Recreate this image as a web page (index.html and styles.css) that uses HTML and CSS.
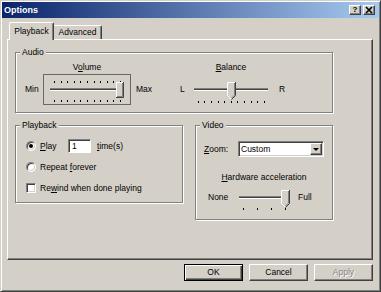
FILE: index.html
```html
<!DOCTYPE html>
<html lang="en">
  <head>
    <meta charset="UTF-8" />
    <meta name="viewport" content="width=device-width, initial-scale=1.0" />
    <title>Options</title>
    <link rel="stylesheet" href="styles.css">
  </head>
  <body>
    <div class="window">
      <div class="titlebar">
        <span class="title">Options</span>
        <span class="caption-btn help">?</span>
        <span class="caption-btn">
          <svg width="10" height="8" viewBox="0 0 10 8">
            <path d="M2 1L8 7M8 1L2 7" stroke="#000" stroke-width="1.6" fill="none" />
          </svg>
        </span>
      </div>

      <div class="tabs">
        <div class="tab active">Playback</div>
        <div class="tab">Advanced</div>
      </div>

      <div class="panel">
        <div class="group audio">
          <span class="group-title">Audio</span>

          <div class="slider volume">
            <span class="caption">V<u>o</u>lume</span>
            <span class="end first">Min</span>
            <svg width="88" height="31" viewBox="0 0 88 31">
              <rect x="0.5" y="0.5" width="87" height="30" fill="none" stroke="#000" stroke-dasharray="1 1" />
              <path d="M11.5 7v2M18.5 7v2M24.5 7v2M31.5 7v2M37.5 7v2M44.5 7v2M51.5 7v2M57.5 7v2M64.5 7v2M70.5 7v2M77.5 7v2" stroke="#000" />
              <path d="M11.5 26v2M18.5 26v2M24.5 26v2M31.5 26v2M37.5 26v2M44.5 26v2M51.5 26v2M57.5 26v2M64.5 26v2M70.5 26v2M77.5 26v2" stroke="#000" />
              <path d="M7 14.5H81" stroke="#808080" />
              <path d="M7 15.5H81" stroke="#404040" />
              <path d="M7 16.5H81" stroke="#fff" />
              <rect x="73" y="8" width="8" height="16" fill="#d4d0c8" />
              <path d="M73.5 23.5V8.5H80.5" stroke="#fff" fill="none" />
              <path d="M80.5 8V23.5H73" stroke="#404040" fill="none" />
              <path d="M79.5 9V22.5H74" stroke="#808080" fill="none" />
            </svg>
            <span class="end last max">Max</span>
          </div>

          <div class="slider balance">
            <span class="caption"><u>B</u>alance</span>
            <span class="end first">L</span>
            <svg width="82" height="31" viewBox="0 0 82 31">
              <path d="M8.5 27v2M14.5 27v2M21.5 27v2M28.5 27v2M34.5 27v2M41.5 27v2M47.5 27v2M54.5 27v2M61.5 27v2M67.5 27v2M74.5 27v2" stroke="#000" />
              <path d="M4 14.5H78" stroke="#808080" />
              <path d="M4 15.5H78" stroke="#404040" />
              <path d="M4 16.5H78" stroke="#fff" />
              <polygon points="37,8 46,8 46,21 41.5,25.5 37,21" fill="#d4d0c8" />
              <path d="M41 25L37.5 21.5V8.5H45" stroke="#fff" fill="none" />
              <path d="M45.5 8V21.5L41.5 25.5" stroke="#404040" fill="none" />
              <path d="M44.5 9V21L41.5 24" stroke="#808080" fill="none" />
            </svg>
            <span class="end last r">R</span>
          </div>
        </div>

        <div class="row">
          <div class="group playback">
            <span class="group-title">Playback</span>
            <div class="option">
              <span class="radio checked"></span>
              <span class="play-label"><u>P</u>lay</span>
              <span class="edit">1</span>
              <span class="times"><u>t</u>ime(s)</span>
            </div>
            <div class="option">
              <span class="radio"></span>
              <span>Repeat <u>f</u>orever</span>
            </div>
            <div class="option">
              <span class="check"></span>
              <span>Re<u>w</u>ind when done playing</span>
            </div>
          </div>

          <div class="group video">
            <span class="group-title">Video</span>
            <div class="zoom-row">
              <span class="zoom-label"><u>Z</u>oom:</span>
              <div class="combo">
                <span class="combo-text">Custom</span>
                <span class="combo-btn"><span class="arrow"></span></span>
              </div>
            </div>
            <div class="hw-caption"><u>H</u>ardware acceleration</div>
            <div class="hw-row">
              <span class="hw-end none">None</span>
              <svg width="58" height="23" viewBox="0 0 58 23">
                <path d="M8.5 20v2M22.5 20v2M36.5 20v2M50.5 20v2" stroke="#000" />
                <path d="M4 8.5H54" stroke="#808080" />
                <path d="M4 9.5H54" stroke="#404040" />
                <path d="M4 10.5H54" stroke="#fff" />
                <polygon points="46,2 55,2 55,15 50.5,19.5 46,15" fill="#d4d0c8" />
                <path d="M50 19L46.5 15.5V2.5H54" stroke="#fff" fill="none" />
                <path d="M54.5 2V15.5L50.5 19.5" stroke="#404040" fill="none" />
                <path d="M53.5 3V15L50.5 18" stroke="#808080" fill="none" />
              </svg>
              <span class="hw-end full">Full</span>
            </div>
          </div>
        </div>
      </div>

      <div class="buttons">
        <div class="btn default">OK</div>
        <div class="btn">Cancel</div>
        <div class="btn disabled">Apply</div>
      </div>
    </div>
  </body>
</html>
```

FILE: styles.css
```css
body {
  margin: 0;
  font-family: "Liberation Sans", Arial, sans-serif;
  font-size: 8.5px;
  line-height: 11px;
  color: #000;
}
.window {
  width: 381px;
  height: 292px;
  box-sizing: border-box;
  background-color: #d4d0c8;
  border: 1px solid;
  border-color: #d4d0c8 #404040 #404040 #d4d0c8;
  box-shadow: inset 1px 1px #fff, inset -1px -1px #808080;
  padding: 1px;
  display: flex;
  flex-direction: column;
}
.titlebar {
  height: 16px;
  background: linear-gradient(to right, #0a246a, #a6caf0);
  display: flex;
  align-items: center;
  padding: 0 4px 0 2px;
}
.title {
  flex: 1;
  color: white;
  font-weight: bold;
  font-size: 9px;
}
.caption-btn {
  width: 12px;
  height: 10px;
  box-sizing: border-box;
  background-color: #d4d0c8;
  border: 1px solid;
  border-color: #fff #404040 #404040 #fff;
  box-shadow: inset -1px -1px #808080;
  display: flex;
  align-items: center;
  justify-content: center;
  font-weight: bold;
  font-size: 8px;
  line-height: 8px;
}
.help {
  margin-right: 2px;
}

/* tabs */
.tabs {
  display: flex;
  align-items: flex-end;
  height: 21px;
  padding-left: 7px;
}
.tab {
  box-sizing: border-box;
  width: 48px;
  height: 14px;
  border: 1px solid;
  border-color: #fff #404040 transparent transparent;
  border-left: 0;
  border-bottom: 0;
  box-shadow: inset -1px 0 #808080;
  border-radius: 0 2px 0 0;
  text-align: center;
  padding-top: 1px;
}
.tab.active {
  width: 45px;
  height: 18px;
  margin-bottom: -1px;
  position: relative;
  z-index: 1;
  background-color: #d4d0c8;
  border-left: 1px solid #fff;
  border-radius: 2px 2px 0 0;
  padding-top: 3px;
}

.panel {
  margin: 0 6px 0 5px;
  height: 221px;
  box-sizing: border-box;
  border: 1px solid;
  border-color: #fff #404040 #404040 #fff;
  box-shadow: inset -1px -1px #808080;
  padding: 12px 0 0 7px;
}

/* group boxes */
.group {
  position: relative;
  box-sizing: border-box;
  border: 1px solid #808080;
  box-shadow: inset 1px 1px #fff, 1px 1px #fff;
}
.group-title {
  position: absolute;
  top: -6px;
  left: 4px;
  padding: 0 2px;
  background-color: #d4d0c8;
}
.audio {
  width: 318px;
  height: 61px;
  display: flex;
  padding: 9px 0 0 9px;
}

/* trackbars */
.slider {
  display: grid;
  grid-template-rows: 11px 31px;
  row-gap: 1px;
  align-items: center;
}
.slider .caption {
  grid-column: 2;
  justify-self: center;
}
.slider svg {
  grid-row: 2;
  grid-column: 2;
  display: block;
}
.slider .first {
  grid-row: 2;
  grid-column: 1;
}
.slider .last {
  grid-row: 2;
  grid-column: 3;
}
.volume {
  grid-template-columns: 18px 88px 21px;
}
.max {
  padding-left: 5px;
}
.balance {
  grid-template-columns: 10px 82px 14px;
  margin-left: 28px;
}
.r {
  padding-left: 7px;
}

.row {
  display: flex;
  align-items: flex-start;
  gap: 12px;
  margin-top: 12px;
}

/* playback */
.playback {
  width: 168px;
  height: 78px;
  padding: 13px 0 0 10px;
  display: flex;
  flex-direction: column;
  gap: 7px;
}
.option {
  display: flex;
  align-items: center;
  height: 14px;
}
.radio,
.check {
  width: 10px;
  height: 10px;
  box-sizing: border-box;
  background-color: white;
  border: 1px solid;
  border-color: #808080 #fff #fff #808080;
  box-shadow: inset 1px 1px #404040, inset -1px -1px #d4d0c8;
  margin-right: 4px;
  display: flex;
  align-items: center;
  justify-content: center;
}
.radio {
  border-radius: 50%;
}
.radio.checked::after {
  content: "";
  width: 4px;
  height: 4px;
  border-radius: 50%;
  background-color: #000;
}
.play-label {
  width: 28px;
}
.edit {
  width: 23px;
  height: 14px;
  box-sizing: border-box;
  background-color: white;
  border: 1px solid;
  border-color: #808080 #fff #fff #808080;
  box-shadow: inset 1px 1px #404040;
  padding-left: 3px;
  line-height: 12px;
}
.times {
  margin-left: 6px;
}

/* video */
.video {
  width: 138px;
  height: 95px;
  padding-top: 15px;
}
.zoom-row {
  display: flex;
  align-items: center;
  padding-left: 8px;
}
.zoom-label {
  width: 34px;
}
.combo {
  width: 86px;
  height: 16px;
  box-sizing: border-box;
  background-color: white;
  border: 1px solid;
  border-color: #808080 #fff #fff #808080;
  box-shadow: inset 1px 1px #404040, inset -1px -1px #d4d0c8;
  padding: 1px;
  display: flex;
  align-items: center;
}
.combo-text {
  flex: 1;
  padding-left: 1px;
}
.combo-btn {
  width: 12px;
  height: 12px;
  box-sizing: border-box;
  background-color: #d4d0c8;
  border: 1px solid;
  border-color: #fff #404040 #404040 #fff;
  box-shadow: inset -1px -1px #808080;
  display: flex;
  align-items: center;
  justify-content: center;
}
.arrow {
  width: 0;
  height: 0;
  border-left: 3px solid transparent;
  border-right: 3px solid transparent;
  border-top: 3px solid #000;
}
.hw-caption {
  text-align: center;
  margin-top: 15px;
}
.hw-row {
  display: flex;
  align-items: flex-start;
  margin-top: 5px;
  padding-left: 12px;
}
.hw-row svg {
  display: block;
}
.hw-end {
  margin-top: 4px;
}
.none {
  width: 27px;
}
.full {
  margin-left: 5px;
}

/* dialog buttons */
.buttons {
  display: flex;
  justify-content: flex-end;
  gap: 6px;
  margin-top: 4px;
  padding-right: 6px;
}
.btn {
  width: 59px;
  height: 17px;
  box-sizing: border-box;
  border: 1px solid;
  border-color: #fff #404040 #404040 #fff;
  box-shadow: inset -1px -1px #808080;
  display: flex;
  align-items: center;
  justify-content: center;
}
.btn.default {
  border-color: #000;
  box-shadow: inset 1px 1px #fff, inset -1px -1px #404040, inset -2px -2px #808080;
}
.btn.disabled {
  color: #808080;
  text-shadow: 1px 1px #fff;
}
```
